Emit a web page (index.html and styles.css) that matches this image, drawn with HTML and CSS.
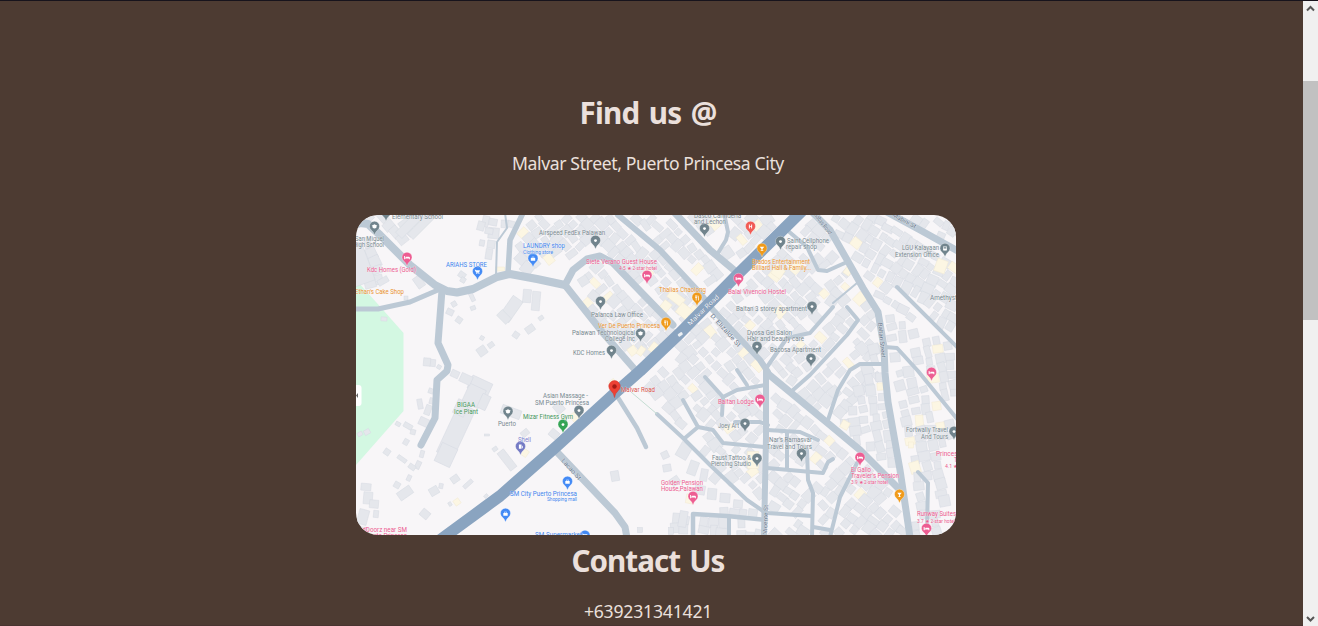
FILE: index.html
```html
<!DOCTYPE html>
<html lang="en">
<head>
<meta charset="utf-8">
<title>Find us</title>
<link rel="stylesheet" href="styles.css">
</head>
<body>
<div class="window">
  <main class="page">
    <h2 class="title">Find us @</h2>
    <p class="line address">Malvar Street, Puerto Princesa City</p>
    <svg class="map" viewBox="356 215 600 320" role="img" aria-label="Map of Malvar Road">
      <path class="park" d="M356 280L376 302L403.500 333V411L356 465Z"/>
      <g id="buildings"></g>
      <g id="roads"></g>
      <path class="major" d="M440 540L485 507L500 496L557 446L615 393L640 371L680 333L740 272L805 208"/>
      <path d="M631 392L657 414" stroke="#c5ddd3" stroke-width="1"/>
      <rect x="677.500" y="333" width="5" height="3" rx="1" fill="#edf0f3" transform="rotate(-35 680 334)"/>
      <g id="pins"></g>
      <g id="labels"></g>
      <rect x="350" y="385" width="11.500" height="21" rx="3" fill="#fff"/>
      <path d="M358 393v5l-2-2.500z" fill="#666"/>
    </svg>
    <h2 class="title contact">Contact Us</h2>
    <p class="line phone">+639231341421</p>
  </main>
  <div class="scrollbar">
    <svg class="arrow" viewBox="0 0 15 15"><path d="M4 9.500L7.500 6L11 9.500"/></svg>
    <div class="thumb"></div>
    <svg class="arrow end" viewBox="0 0 15 15"><path d="M4 6L7.500 9.500L11 6"/></svg>
  </div>
</div>
<script src="map.js"></script>
</body>
</html>
```
FILE: styles.css
```css
* { box-sizing: border-box; }
body { margin: 0; background: #4d3b32; overflow: hidden; }
.window { display: flex; height: 626px; border-top: 1px solid #17131c; }
.page {
  flex: 1;
  padding: 89px 7px 0 0;
  border-bottom: 1px solid #483430;
  overflow: hidden;
  color: #ebe0dc;
  font-family: "Segoe UI", "Noto Sans", "Open Sans", sans-serif;
  text-align: center;
}
.title { margin: 0; height: 46px; font-size: 29.600px; line-height: 46px; font-weight: 700; letter-spacing: -.8px; word-spacing: 2.500px; }
.line { margin: 0; height: 28px; font-size: 17.600px; line-height: 28px; }
.address { margin-top: 13px; letter-spacing: -.38px; }
.map { display: block; width: 600px; height: 320px; margin: 38px 0 0 356px; border-radius: 22px; background: #f8f6f8; }
.contact { margin-top: 3px; letter-spacing: -1px; }
.phone { margin-top: 13px; letter-spacing: -.2px; }
.scrollbar { width: 15px; display: flex; flex-direction: column; background: #f0f0f0; }
.arrow { width: 15px; height: 15px; }
.arrow path { fill: none; stroke: #555; stroke-width: 2; }
.end { margin-top: auto; }
.thumb { height: 239px; margin-top: 65px; background: #c1c1c1; }
.park { fill: #d3f8e2; }
.building { fill: #e5e7ec; stroke: #d6dae2; stroke-width: .5; }
.shop { fill: #fcf6e3; stroke: #f1e9d3; }
.road { fill: none; stroke: #bcc9d5; stroke-linejoin: round; stroke-linecap: round; }
.major { fill: none; stroke: #8aa4c0; stroke-width: 11.500; stroke-linejoin: round; }
.label { font-family: Roboto, sans-serif; stroke: #fbfafb; stroke-width: .6; stroke-opacity: .6; paint-order: stroke; }
```
FILE: map.js
```js
const NS = 'http://www.w3.org/2000/svg';
function add(parent, tag, attrs, text) {
  const el = document.createElementNS(NS, tag);
  for (const key in attrs) el.setAttribute(key, attrs[key]);
  if (text) el.textContent = text;
  document.getElementById(parent).appendChild(el);
  return el;
}

// Street centrelines: width, then points
const roads = [
  [8, '350,227 360,223 368,224 380,235 410,265 435,285 447,291 457,292.5 473,289 497,277 510,274 537,279 565,285'],
  [7, '565,285 603,333 637,372'],
  [7, '565,285 573,270 587,259 600,256 613,263 640,291 673,325'],
  [6, '618,215 660,250 700,293 713,310 760,360 768,372'],
  [7, '673,211 710,250 740,275'],
  [4, '724,213 728,232 726,240 718,253'],
  [5, '354,309 378,309 410,302 438,290'],
  [7, '442,290 438,343 448,365 447,371 437,380 435,418 421,445'],
  [5.5, '523,213 510,240 508,273'],
  [2, '505,213 507,228 497,242 496,275'],
  [4.5, '617,396 637,428 646,447'],
  [7, '557,452 615,513 625,527 627,538'],
  [4, '657,414 683,438 710,465 747,500 763,511'],
  [4, '683,400 698,427 685,438'],
  [4, '698,427 713,430 723,443 765,447'],
  [4, '705,377 723,397 722,415'],
  [4, '723,397 737,390 766,385'],
  [4, '737,370 747,385'],
  [4, '735,422 760,422 768,425'],
  [4.5, '693,537 693,514 727,516 766,520'],
  [4, '729,518 729,537'],
  [6, '766,370 766,437 764,537'],
  [7, '767,373 790,392 830,425 860,450 899,489'],
  [7, '808,208 830,230 850,265 863,288 878,312 884,347 885,373 888,402 900,470 910,537'],
  [7, '885,211 920,230 958,251'],
  [4, '787,230 807,247 818,270 827,271 847,262'],
  [4, '897,287 958,348'],
  [2, '857,283 833,303'],
  [4, '833,307 810,333 787,338 767,367'],
  [4, '847,307 858,320 847,335 810,375 793,390'],
  [4, '885,347 897,348 918,371 958,420'],
  [4, '883,364 860,364 850,370 838,390 828,420'],
  [4, '767,430 800,432 818,440'],
  [4, '787,432 787,468'],
  [4, '767,468 823,473 828,462 833,459'],
  [4, '807,450 808,480 813,493 812,537'],
  [4, '767,513 812,516'],
  [4, '813,527 830,530'],
  [4, '857,463 840,497 830,537'],
  [4, '918,472 928,483 927,530']
];
const lines = roads.map(([w, p]) => [w, p.split(' ').map(q => q.split(',').map(Number))]);
for (const [w, p] of roads) add('roads', 'polyline', { class: 'road', points: p, 'stroke-width': w });
lines.push([11.5, [[440, 540], [485, 507], [557, 446], [615, 393], [640, 371], [680, 333], [740, 272], [805, 208]]]);

let seed = 41;
function rand() { seed = (seed * 16807) % 2147483647; return seed / 2147483647; }

function inside(x, y, poly) {
  let hit = false;
  for (let i = 0, j = poly.length - 1; i < poly.length; j = i++) {
    const [a, b] = poly[i], [c, d] = poly[j];
    if ((b > y) !== (d > y) && x < (c - a) * (y - b) / (d - b) + a) hit = !hit;
  }
  return hit;
}
function onRoad(x, y) {
  return lines.some(([w, pts]) => pts.slice(1).some(([c, d], i) => {
    const [a, b] = pts[i], dx = c - a, dy = d - b;
    const t = Math.max(0, Math.min(1, ((x - a) * dx + (y - b) * dy) / (dx * dx + dy * dy)));
    return Math.hypot(x - a - t * dx, y - b - t * dy) < w / 2 + 2;
  }));
}
function building(x, y, w, h, angle, shop) {
  add('buildings', 'rect', { class: shop ? 'building shop' : 'building', x: x - w / 2, y: y - h / 2, width: w, height: h, transform: `rotate(${angle} ${x} ${y})` });
}

// Densely built blocks: rotation of the lots, then outline
const blocks = [
  [48, [[522, 215], [795, 215], [638, 368], [571, 288], [600, 262], [585, 250], [515, 270]]],
  [45, [[805, 215], [815, 220], [877, 315], [882, 372], [830, 420], [768, 370], [700, 312]]],
  [32, [[820, 215], [956, 215], [956, 345], [882, 310]]],
  [48, [[645, 375], [708, 312], [766, 372], [766, 516], [685, 438], [638, 390]]],
  [40, [[770, 378], [885, 470], [905, 535], [770, 535], [770, 378]]],
  [80, [[883, 315], [956, 345], [956, 425], [935, 455], [950, 490], [935, 535], [915, 535], [898, 470], [840, 428]]],
  [5, [[670, 515], [766, 505], [766, 535], [670, 535]]],
  [48, [[363, 215], [440, 215], [400, 245], [388, 235]]],
  [72, [[356, 240], [370, 242], [387, 270], [370, 288], [356, 280]]],
  [10, [[480, 215], [522, 215], [508, 267], [486, 267]]]
];
for (const [angle, poly] of blocks) {
  const r = angle * Math.PI / 180, cos = Math.cos(r), sin = Math.sin(r);
  for (let v = -900; v < 900; v += 10.5) {
    for (let u = -900; u < 1200; u += 9.5) {
      const x = 656 + u * cos - v * sin, y = 375 + u * sin + v * cos;
      if (x < 350 || x > 965 || y < 208 || y > 542 || !inside(x, y, poly) || onRoad(x, y)) continue;
      if (rand() < .1) continue;
      building(x + rand() * 3, y + rand() * 3, 6 + rand() * 6, 6 + rand() * 6, angle + rand() * 18 - 9, rand() < .07);
    }
  }
}

// Individual buildings: x, y, width, height, angle
[
  [511, 309, 12, 25, 35], [527, 296, 8, 13, 5], [536, 301, 8, 19, 5], [504, 317, 8, 13, -45], [516, 335, 6, 6, 35],
  [530, 329, 9, 7, -35], [541, 318, 5, 4, -35], [482, 351, 9, 9, -35], [491, 345, 6, 5, -35], [482, 338, 4, 4, 30],
  [450, 312, 7, 6, 25], [459, 320, 6, 6, 35], [454, 304, 5, 5, -30], [472, 297, 4, 9, -25], [473, 308, 5, 4, -20],
  [427, 362, 7, 8, 5], [433, 363, 5, 7, 5], [439, 367, 4, 4, 30], [384, 319, 6, 4, 5], [406, 298, 4, 4, 0],
  [462, 275, 7, 6, 35], [463, 280, 5, 5, 30], [383, 281, 11, 6, -30], [419, 282, 8, 12, -35],
  [480, 386, 22, 14, 25], [474, 396, 18, 20, 25], [484, 402, 9, 15, 25], [466, 379, 12, 9, 25], [455, 374, 8, 7, 25],
  [456, 431, 18, 54, 25], [446, 455, 17, 20, 25], [461, 408, 12, 15, 25],
  [431, 391, 5, 5, 20], [420, 404, 5, 10, -10], [428, 410, 6, 10, 20], [432, 401, 5, 6, 15], [424, 422, 10, 8, 25],
  [398, 424, 5, 4, 30], [408, 426, 9, 5, 30], [413, 432, 5, 5, 15], [406, 442, 5, 6, 30], [387, 452, 6, 6, 35],
  [402, 459, 10, 4, 35], [418, 465, 5, 8, 25], [412, 467, 7, 5, 35], [409, 478, 4, 6, 25], [422, 454, 4, 7, 15],
  [405, 493, 15, 9, -35], [397, 485, 6, 6, 30], [425, 514, 9, 8, 40], [434, 491, 9, 8, -30], [455, 479, 8, 7, -35],
  [468, 484, 11, 4, -42], [441, 486, 4, 5, 10], [486, 496, 4, 3, -40], [450, 504, 3, 4, -30],
  [366, 487, 10, 7, 5], [368, 498, 9, 12, 5], [374, 504, 9, 8, 5], [363, 517, 10, 15, 15], [376, 514, 5, 7, 5],
  [361, 531, 14, 8, 5], [367, 432, 6, 5, -30], [360, 434, 5, 4, -30],
  [507, 460, 8, 22, -38], [511, 412, 20, 9, 20], [495, 449, 5, 4, -35], [525, 433, 8, 6, -40], [487, 435, 5, 2, 0],
  [554, 434, 9, 8, 40], [559, 408, 9, 10, -40], [615, 476, 8, 10, -10], [640, 530, 5, 5, 0],
  [357, 265, 24, 40, -20], [410, 224, 9, 32, 45], [422, 225, 8, 33, 45], [481, 226, 7, 9, 15], [489, 231, 8, 6, 10],
  [482, 243, 5, 6, 10], [665, 455, 7, 7, -25], [667, 468, 8, 7, -10], [684, 451, 12, 15, 30], [693, 468, 9, 14, 20],
  [675, 481, 9, 8, -35], [704, 475, 7, 12, 10], [715, 478, 9, 10, 40], [700, 490, 10, 9, 10], [712, 494, 9, 11, 5],
  [725, 498, 10, 9, 5], [738, 504, 9, 8, 5], [683, 519, 8, 16, 10], [671, 531, 5, 7, 0]
].forEach(b => building(...b, false));
[
  [676, 298, 17, 9, 38], [684, 311, 13, 12, 38], [665, 307, 9, 12, 38], [654, 348, 8, 10, 38], [641, 351, 6, 9, 35],
  [500, 269, 9, 4, 0], [525, 453, 6, 7, 35], [457, 502, 6, 6, -35], [753, 460, 11, 17, 0], [845, 425, 8, 8, 30],
  [941, 266, 11, 13, 20], [911, 445, 5, 6, 0], [690, 499, 8, 9, 10], [575, 417, 8, 9, -40], [778, 272, 11, 10, 35],
  [613, 383, 6, 7, -35], [848, 271, 7, 8, 35]
].forEach(b => building(...b, true));

const grey = '#71848d', pink = '#ed5d92', orange = '#f09a1a', blue = '#438af5', green = '#34a455', red = '#ed4135';

// Markers: tip x, tip y, colour, glyph
const glyphs = {
  dot: 'M-1.5 0a1.500 1.500 0 1 0 3 0a1.500 1.500 0 1 0-3 0Z',
  bed: 'M-3-1.800h1v1.800h1v-1h3q1 0 1 1v1.800h-1V1h-4v.8h-1Z',
  food: 'M-2-2.500h.5v2h.4v-2h.5v2h.4v-2h.5v2.500l-.8.600V3h-.8V.6L-2 0ZM1.300-2.500q1 1 .7 3V3h-.8Z',
  bag: 'M-2.300-.7h1v-1.300h2.600v1.300h1V2.300h-4.600ZM-.8-.7H.8v-.8H-.8Z',
  cart: 'M-3-2h1.200l.4.700H2.600L1.700 1.100h-3.100ZM-1.200 1.600h1v1h-1ZM1 1.600h1v1H1Z',
  cap: 'M-3-1L0-2.500L3-1L2 0v1.300Q0 2.700-2 1.300V0Z',
  glass: 'M-2.400-2h4.800L.5.300V2h1v.6h-3V2h1V.3Z',
  bus: 'M-2-2.200h4v4h-.7v.8H.6v-.8H-.6v.8h-.7v-.8H-2ZM-1.400-1.500v1.300h2.800v-1.300Z',
  h: 'M-1.700-2.100h1v1.600h1.400v-1.600h1v4.200h-1V.5H-.7v1.600h-1Z',
  pump: 'M-1.700-2.200h2.800v4.500h-2.800ZM1.600-1.200l.8.700v2.300h-.8Z'
};
[
  [374.500, 235, grey, 'cap'], [386, 221, grey, 'dot'], [407, 266, pink, 'bed'], [477.500, 280, blue, 'cart'], [533, 267, blue, 'bag'],
  [595.500, 249, grey, 'dot'], [704.500, 237, grey, 'dot'], [750.500, 235, '#f15b54', 'h'], [762, 257, orange, 'glass'], [780.500, 250, grey, 'dot'],
  [945, 257, grey, 'bus'], [647, 284, pink, 'bed'], [738.500, 287, pink, 'bed'], [697, 306, orange, 'food'], [666, 331, orange, 'food'],
  [600.500, 310, grey, 'dot'], [640.500, 342, grey, 'cap'], [611.500, 359, grey, 'dot'], [812, 315, grey, 'dot'], [757, 355, grey, 'dot'],
  [811, 367, grey, 'dot'], [931.500, 381, pink, 'bed'], [508, 420, grey, 'cap'], [579, 419, grey, 'dot'], [563, 433, green, 'dot'],
  [520.500, 455, '#747ac4', 'pump'], [567.500, 490, blue, 'bag'], [505.500, 522, blue, 'bag'], [585, 544, blue, 'cart'], [760, 408, pink, 'bed'],
  [745, 432, grey, 'dot'], [757, 467, grey, 'dot'], [801.500, 462, grey, 'dot'], [860, 466, pink, 'bed'], [693, 505, pink, 'bed'],
  [899.500, 503, orange, 'glass'], [926.500, 537, pink, 'bed'], [954, 440, grey, 'dot']
].forEach(([x, y, fill, glyph]) => {
  add('pins', 'path', { d: 'M0 0Q-.8-3-3.200-4.900A5 5 0 1 1 3.200-4.900Q.8-3 0 0Z', fill, stroke: '#fff', 'stroke-width': .3, transform: `translate(${x} ${y})` });
  add('pins', 'path', { d: glyphs[glyph], fill: '#fff', 'fill-rule': 'evenodd', transform: `translate(${x} ${y - 8.4}) scale(.95)` });
});
add('pins', 'path', { d: 'M614.500 397.500Q613.700 393 611 390.800A5.700 5.700 0 1 1 618 390.800Q615.300 393 614.500 397.500Z', fill: red, stroke: '#d33228', 'stroke-width': .5 });
add('pins', 'circle', { cx: 614.5, cy: 386.500, r: 2.200, fill: '#a51b16' });

// Place names: text, left, baseline, drawn width, colour, size, rotation
const G = '#788990', P = '#ec5a8f', O = '#ea932f', B = '#3f86ee', N = '#43965a', S = '#65758a';
[
  ['Elementary School', 392, 218.500, 51, G], ['San Miguel', 355, 240.500, 29, G], ['High School', 353, 246.500, 31, G],
  ['Kdc Homes (Gold)', 367, 271.500, 49, P], ["Ethan's Cake Shop", 355, 294, 49, O], ['ARIAHS STORE', 446, 266.500, 41, B],
  ['LAUNDRY shop', 523, 248, 42, B], ['Clothing store', 523, 253.500, 30, B, 4.8], ['Airspeed FedEx Palawan', 539, 235, 66, G],
  ['Siete Verano Guest House', 586, 264, 71, P], ['4.5 ★ 2-star hotel', 619, 270, 38, P, 4.6],
  ['Dasco Carinderia', 694, 218, 47, G], ['and Lechon', 694, 223.500, 32, G], ['Saint Cellphone', 787, 243, 42, G], ['repair shop', 786, 249, 31, G],
  ['Brados Entertainment', 752, 264, 58, O], ['Billiard Hall & Family...', 752, 269.500, 59, O], ['LGU Kalayaan', 902, 250, 37, G], ['Extension Office', 895, 256.500, 44, G],
  ['Thalias Chaolong', 659, 291.500, 47, O], ['Balai Vivencio Hostel', 728, 294, 58, P], ['Baltan 3 storey apartment', 736, 310.500, 71, G],
  ['Amethyst', 930, 299.500, 27, G], ['Palanca Law Office', 591, 316.500, 52, G], ['Ver De Puerto Princesa', 598, 327.500, 62, O],
  ['Palawan Technological', 572, 335, 63, G], ['College Inc', 605, 341, 30, G], ['KDC Homes', 573, 355, 32, G],
  ['Dyosa Gel Salon', 747, 334.500, 45, G], ['Hair and beauty care', 747, 340.500, 57, G], ['Bacosa Apartment', 770, 352, 51, G],
  ['Malvar Road', 621, 391.500, 34, '#d9524d'], ['Asian Massage -', 543, 398, 45, G], ['SM Puerto Princesa', 535, 405, 54, G],
  ['Mizar Fitness Gym', 523, 418.500, 50, N], ['BIGAA', 457, 407, 18, N], ['Ice Plant', 454, 413.500, 24, N], ['Puerto', 498, 425.500, 18, G],
  ['Shell', 518, 442, 13, '#7c82cf'], ['SM City Puerto Princesa', 510, 495.500, 67, B], ['Shopping mall', 547, 501, 30, B, 4.8],
  ['SM Supermarket', 535, 536.500, 47, B], ['RedDoorz near SM', 355, 531.500, 52, P], ['Puerto Princesa', 364, 537.500, 43, P],
  ['Baltan Lodge', 718, 403.500, 36, P], ['Joey Art', 718, 428, 21, G], ['Faust Tattoo &', 712, 460, 39, G], ['Piercing Studio', 711, 466, 40, G],
  ["Nar's Ramasvar", 769, 441.500, 43, G], ['Travel and Tours', 767, 448.500, 45, G], ['Golden Pension', 661, 485, 42, P], ['House,Palawan', 661, 490.500, 42, P],
  ['El Gallo', 851, 472, 20, P], ["Traveler's Pension", 851, 478, 48, P], ['3.9 ★ 2-star hotel', 851, 484, 37, P, 4.6],
  ['Fortwally Travel', 906, 432, 42, G], ['And Tours', 921, 438.500, 27, G], ['Princesa', 936, 456, 25, P], ['T', 954, 462, 3, P], ['4.1 ★', 945, 468, 13, P, 4.6],
  ['Runway Suites', 917, 515.500, 39, P], ['3.7 ★ 2-star hotel', 917, 522.500, 38, P, 4.6],
  ['Malvar Road', 690, 326, 41, '#f4f8ff', 6.8, -44], ['D. Elizalde St', 710, 316, 42, S, 6.6, 48],
  ['Sabas Road', 814, 215, 25, S, 6, 53], ['Mabini St', 892, 216, 26, S, 6, 29], ['Baltan Street', 878, 323, 35, S, 6, 84],
  ['Lacao St', 561, 461, 26, S, 6.5, 48], ['Vicente St', 767, 534, 29, S, 6, -88]
].forEach(([text, x, y, w, fill, size = 6.5, turn = 0]) => {
  const el = add('labels', 'text', { class: 'label', x, y, fill, 'font-size': size, textLength: w, lengthAdjust: 'spacingAndGlyphs', transform: `rotate(${turn} ${x} ${y})` }, text);
  if (fill === '#f4f8ff') el.style.stroke = '#60758d';
});
```
